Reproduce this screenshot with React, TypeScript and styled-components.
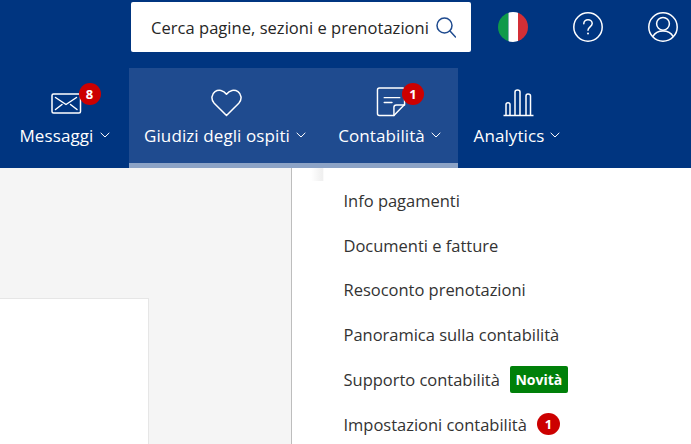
import React from "react";
import styled, { createGlobalStyle } from "styled-components";

const Global = createGlobalStyle`
  html, body { margin: 0; padding: 0; width: 691px; height: 444px; overflow: hidden; background: #fff; }
  body { font-family: "Open Sans", "Noto Sans", "Liberation Sans", sans-serif; }
  * { box-sizing: border-box; }
`;

const Page = styled.div`
  width: 691px;
  height: 444px;
  display: flex;
  flex-direction: column;
  overflow: hidden;
`;
const Header = styled.header`
  height: 168px;
  flex: none;
  background: #003580;
  display: flex;
  flex-direction: column;
`;
const TopRow = styled.div`
  height: 68px;
  flex: none;
  display: flex;
  align-items: flex-start;
  padding: 2px 0 0 131px;
`;
const SearchBox = styled.div`
  width: 340px;
  height: 50px;
  background: #fff;
  border-radius: 2px;
  display: flex;
  align-items: center;
  justify-content: space-between;
  padding: 0 15px 0 20px;
  font-size: 16.5px;
  letter-spacing: 0.04px;
  color: #262626;
  white-space: nowrap;
`;
const TopIcons = styled.div`
  display: flex;
  align-items: center;
  height: 50px;
  margin-left: 27px;
  gap: 45px;
`;
const Nav = styled.nav`
  height: 100px;
  display: flex;
`;
const Group = styled.div`
  display: flex;
  background: #1f4b8f;
  border-bottom: 5px solid #8ca3c6;
`;
const NavItem = styled.div<{ $w: number }>`
  width: ${(p) => p.$w}px;
  display: flex;
  flex-direction: column;
  align-items: center;
  color: #fff;
  font-size: 17px;
  letter-spacing: 0.1px;
  white-space: nowrap;
`;
const IconWrap = styled.div<{ $shift: number }>`
  position: relative;
  height: 50px;
  width: 48px;
  margin-left: ${(p) => p.$shift}px;
  display: flex;
  align-items: flex-end;
  justify-content: center;
  padding-bottom: 1px;
`;
const NavBadge = styled.span<{ $left: number }>`
  position: absolute;
  top: 15px;
  left: ${(p) => p.$left}px;
  width: 22px;
  height: 22px;
  border-radius: 50%;
  background: #cc0000;
  color: #fff;
  font-size: 13px;
  font-weight: 700;
  letter-spacing: 0;
  display: flex;
  align-items: center;
  justify-content: center;
`;
const NavLabel = styled.div`
  display: flex;
  align-items: center;
  gap: 6px;
  height: 34px;
`;
const Body = styled.div`
  flex: 1;
  display: flex;
  min-height: 0;
`;
const LeftPane = styled.div`
  width: 291px;
  flex: none;
  background: #f5f5f5;
  padding-top: 130px;
`;
const Card = styled.div`
  width: 149px;
  height: 200px;
  background: #fff;
  border-top: 1px solid #e6e6e6;
  border-right: 1px solid #e6e6e6;
`;
const Dropdown = styled.div`
  flex: 1;
  position: relative;
  background: #fff;
  border-left: 1px solid #bdbdbd;
  padding: 10px 0 0 51.5px;
`;
const Fade = styled.div`
  position: absolute;
  left: 0;
  top: 0;
  width: 32px;
  height: 13px;
  background: linear-gradient(to right, #fff 60%, #efefef 95%, #fff 100%);
`;
const Row = styled.div`
  height: 44.8px;
  display: flex;
  align-items: center;
  font-size: 16.5px;
  letter-spacing: -0.02px;
  color: #333;
  white-space: nowrap;
`;
const NewTag = styled.span`
  margin-left: 10px;
  height: 27px;
  width: 58px;
  background: #008009;
  border-radius: 2px;
  color: #fff;
  font-size: 14px;
  font-weight: 700;
  letter-spacing: 0;
  display: flex;
  align-items: center;
  justify-content: center;
`;
const CountBadge = styled.span`
  margin-left: 10px;
  width: 23px;
  height: 22px;
  border-radius: 50%;
  background: #cc0000;
  color: #fff;
  font-size: 13px;
  font-weight: 700;
  letter-spacing: 0;
  display: flex;
  align-items: center;
  justify-content: center;
`;
const MailSvg = styled.svg`
  margin-bottom: 3px;
`;

const Chevron = () => (
  <svg width="10" height="6" viewBox="0 0 10 6" fill="none" stroke="#fff" strokeWidth="1">
    <path d="M.7.8 5 5 9.3.8" />
  </svg>
);

const Search = () => (
  <svg width="20" height="21" viewBox="0 0 20 21" fill="none" stroke="#1f4b8f" strokeWidth="1.5">
    <circle cx="8.5" cy="8.5" r="7.5" />
    <path d="M14 14l5.5 6" strokeLinecap="round" />
  </svg>
);

const Flag = () => (
  <svg width="30" height="30" viewBox="0 0 30 30">
    <defs>
      <clipPath id="flag-clip"><circle cx="15" cy="15" r="15" /></clipPath>
    </defs>
    <g clipPath="url(#flag-clip)">
      <rect width="10.5" height="30" fill="#0f9a4a" />
      <rect x="10.5" width="9.5" height="30" fill="#fff" />
      <rect x="20" width="10" height="30" fill="#d32f36" />
    </g>
  </svg>
);

const Help = () => (
  <svg width="30" height="30" viewBox="0 0 30 30" fill="none" stroke="#fff" strokeWidth="1.5">
    <circle cx="15" cy="15" r="14.2" />
    <path d="M10.8 11.8c0-2.5 1.9-4.1 4.2-4.1s4.2 1.6 4.2 3.9c0 3.2-4.2 3.4-4.2 6.6" strokeLinecap="round" />
    <circle cx="15" cy="21.6" r="1" fill="#fff" stroke="none" />
  </svg>
);

const User = () => (
  <svg width="30" height="30" viewBox="0 0 30 30" fill="none" stroke="#fff" strokeWidth="1.5">
    <circle cx="15" cy="15" r="14.2" />
    <circle cx="15" cy="11.8" r="6.4" />
    <path d="M4.8 24.6c2-3.6 5.8-5.6 10.2-5.6s8.2 2 10.2 5.6" />
  </svg>
);

const Mail = () => (
  <MailSvg width="31" height="21" viewBox="0 0 31 21" fill="none" stroke="#fff" strokeWidth="1.5" strokeLinejoin="round">
    <rect x="1" y="1" width="28.5" height="19" rx="1.5" />
    <path d="M4.5 4.5 15 11.5l10.500-7M4.500 16.500l6.500-5M26 16.500l-6.500-5" strokeLinecap="round" />
  </MailSvg>
);

const Heart = () => (
  <svg width="31" height="28" viewBox="0 0 31 28" fill="none" stroke="#fff" strokeWidth="1.5" strokeLinejoin="round">
    <path d="M15.5 26.5 3.2 14.2C-.4 10.4.6 5 4 2.6 7.6.2 12.500 1 15.500 5.200 18.500 1 23.400.2 27 2.600c3.400 2.400 4.400 7.800.8 11.600Z" />
  </svg>
);

const Note = () => (
  <svg width="31" height="30" viewBox="0 0 31 31" fill="none" stroke="#fff" strokeWidth="1.5" strokeLinejoin="round" strokeLinecap="round">
    <path d="M18 29.5H3c-1.200 0-2-.8-2-2V3c0-1.200.8-2 2-2h24c1.200 0 2 .8 2 2v15Z" />
    <path d="M18 29.500v-8.500c0-1.500 1-2.500 2.500-2.500H29" />
    <path d="M8 11h16M8 16h8" />
  </svg>
);

const Bars = () => (
  <svg width="31" height="28" viewBox="0 0 31 28" fill="none" stroke="#fff" strokeWidth="1.5" strokeLinejoin="round">
    <path d="M.5 26.500h30" />
    <path d="M3 26.500v-11c0-1 .8-1.800 2-1.800s2 .8 2 1.800v11" />
    <path d="M12 26.500V3c0-1.200 1-2 2.500-2S17 1.800 17 3v23.500" />
    <path d="M23 26.500V7c0-1.200.8-2 2-2s2.500.8 2.500 2v19.500" />
  </svg>
);

const items: React.ReactNode[] = [
  "Info pagamenti",
  "Documenti e fatture",
  "Resoconto prenotazioni",
  "Panoramica sulla contabilità",
  <>Supporto contabilità<NewTag>Novità</NewTag></>,
  <>Impostazioni contabilità<CountBadge>1</CountBadge></>,
];

export default function App() {
  return (
    <Page>
      <Global />
      <Header>
        <TopRow>
          <SearchBox>
            <span>Cerca pagine, sezioni e prenotazioni</span>
            <Search />
          </SearchBox>
          <TopIcons>
            <Flag />
            <Help />
            <User />
          </TopIcons>
        </TopRow>
        <Nav>
          <NavItem $w={129}>
            <IconWrap $shift={4}>
              <Mail />
              <NavBadge $left={36}>8</NavBadge>
            </IconWrap>
            <NavLabel>Messaggi <Chevron /></NavLabel>
          </NavItem>
          <Group>
            <NavItem $w={192}>
              <IconWrap $shift={2}><Heart /></IconWrap>
              <NavLabel>Giudizi degli ospiti <Chevron /></NavLabel>
            </NavItem>
            <NavItem $w={137}>
              <IconWrap $shift={3}>
                <Note />
                <NavBadge $left={35}>1</NavBadge>
              </IconWrap>
              <NavLabel>Contabilità <Chevron /></NavLabel>
            </NavItem>
          </Group>
          <NavItem $w={118}>
            <IconWrap $shift={2}><Bars /></IconWrap>
            <NavLabel>Analytics <Chevron /></NavLabel>
          </NavItem>
        </Nav>
      </Header>
      <Body>
        <LeftPane><Card /></LeftPane>
        <Dropdown>
          <Fade />
          {items.map((it, i) => (
            <Row key={i}>{it}</Row>
          ))}
        </Dropdown>
      </Body>
    </Page>
  );
}
